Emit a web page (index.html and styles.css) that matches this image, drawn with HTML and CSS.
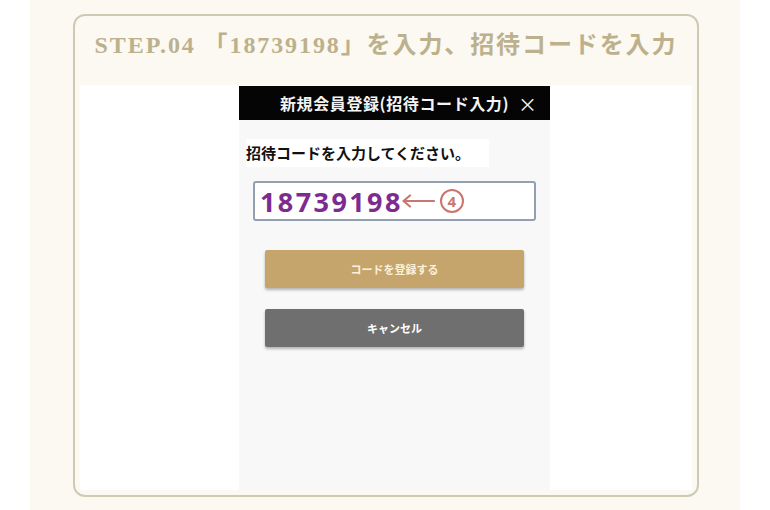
FILE: index.html
```html
<!DOCTYPE html>
<html lang="ja">
<head>
<meta charset="utf-8">
<title>STEP.04</title>
<link rel="stylesheet" href="styles.css">
</head>
<body>
<div class="page">
  <section class="step">
    <h2 class="step-title">STEP.04 「18739198」を入力、招待コードを入力</h2>
    <div class="shot">
      <div class="screen">
        <div class="screen-head">
          <span class="head-title">新規会員登録(招待コード入力)</span>
          <span class="head-close">×</span>
        </div>
        <div class="screen-body">
          <p class="label">招待コードを入力してください。</p>
          <div class="code-input">
            <span class="code">18739198</span>
            <svg class="arrow" width="34" height="14" viewBox="0 0 34 14"><path d="M33 7H3M9 1.5L2.5 7L9 12.5" fill="none" stroke="#c8766f" stroke-width="2.2" stroke-linecap="round" stroke-linejoin="round"/></svg>
            <span class="num">4</span>
          </div>
          <div class="btn btn-gold">コードを登録する</div>
          <div class="btn btn-gray">キャンセル</div>
        </div>
      </div>
    </div>
  </section>
</div>
</body>
</html>
```
FILE: styles.css
```css
html, body {
  margin: 0;
  padding: 0;
  background: #ffffff;
}
.page {
  margin-left: 30px;
  width: 710px;
  height: 510px;
  box-sizing: border-box;
  padding: 14px 0 0 43px;
  background: #fbf9f1;
}
.step {
  width: 626px;
  height: 483px;
  box-sizing: border-box;
  border: 2px solid #cfcab2;
  border-radius: 12px;
  background: #fbf9f2;
  display: flex;
  flex-direction: column;
  padding: 0 5px 5px 5px;
}
.step-title {
  margin: 0;
  height: 69px;
  box-sizing: border-box;
  padding-top: 9px;
  text-align: center;
  font-family: "Liberation Serif", "Noto Sans CJK JP", serif;
  font-weight: bold;
  font-size: 24px;
  letter-spacing: 1.9px;
  color: #bcb18c;
  white-space: nowrap;
}
.shot {
  flex: 1;
  background: #ffffff;
  padding: 1px 0 0 159px;
  display: flex;
}
.screen {
  width: 311px;
  display: flex;
  flex-direction: column;
  background: #f8f8f8;
  font-family: "Noto Sans CJK JP", "Noto Sans", sans-serif;
}
.screen-head {
  height: 34px;
  background: #050505;
  color: #f4f4f4;
  display: flex;
  align-items: center;
  padding-left: 41px;
  font-weight: bold;
  font-size: 16px;
  letter-spacing: 0.6px;
}
.head-title {
  flex: none;
}
.head-close {
  margin-left: 9px;
  font-size: 19px;
  font-weight: normal;
}
.screen-body {
  flex: 1;
  padding: 19px 0 0 7px;
}
.label {
  margin: 0;
  font-size: 15px;
  font-weight: bold;
  color: #111111;
  line-height: 28px;
  background: #ffffff;
  width: 243px;
}
.code-input {
  margin: 14px 0 0 7px;
  width: 283px;
  height: 40px;
  box-sizing: border-box;
  border: 2px solid #93a0b1;
  border-radius: 3px;
  background: #ffffff;
  display: flex;
  align-items: center;
  padding-left: 5px;
}
.code {
  font-family: "Noto Sans", sans-serif;
  font-weight: bold;
  font-size: 27px;
  letter-spacing: 2.4px;
  color: #7d2b90;
  line-height: 1;
}
.arrow {
  margin-left: -2px;
}
.num {
  margin-left: 5px;
  width: 24px;
  height: 24px;
  box-sizing: border-box;
  border: 2px solid #c8766f;
  border-radius: 50%;
  color: #c8766f;
  font-family: "Noto Sans", sans-serif;
  font-weight: bold;
  font-size: 15px;
  display: flex;
  align-items: center;
  justify-content: center;
  line-height: 1;
}
.btn {
  margin: 29px 0 0 19px;
  width: 259px;
  height: 38px;
  border-radius: 2px;
  display: flex;
  align-items: center;
  justify-content: center;
  color: #ffffff;
  font-size: 11px;
  font-weight: bold;
  box-shadow: 0 2px 3px rgba(0, 0, 0, 0.28);
}
.btn-gold {
  background: #c5a56b;
  color: #fbf1dd;
}
.btn-gray {
  margin-top: 21px;
  background: #6f6f6f;
}
```
